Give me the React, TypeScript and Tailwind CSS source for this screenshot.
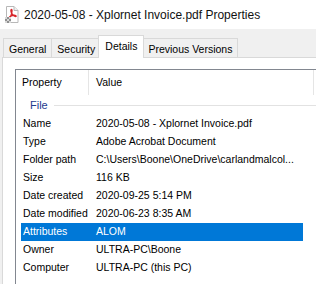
import React from "react";

const rows = [
  ["Name", "2020-05-08 - Xplornet Invoice.pdf"],
  ["Type", "Adobe Acrobat Document"],
  ["Folder path", "C:\\Users\\Boone\\OneDrive\\carlandmalcol..."],
  ["Size", "116 KB"],
  ["Date created", "2020-09-25 5:14 PM"],
  ["Date modified", "2020-06-23 8:35 AM"],
  ["Attributes", "ALOM"],
  ["Owner", "ULTRA-PC\\Boone"],
  ["Computer", "ULTRA-PC (this PC)"],
];

const tabs = ["General", "Security", "Details", "Previous Versions"];

const PdfIcon = () => (
  <svg width="14" height="17" viewBox="0 0 14 17">
    <path d="M1.5 0.5h7.5l4 4v12h-11.5z" fill="#fff" stroke="#b8b8b8" />
    <path d="M9 0.5v4h4" fill="#eee" stroke="#b8b8b8" />
    <path
      d="M6.5 3.5c-1 0-.7 2.4.4 4.2 1.1 1.8 2.9 3 4 2.7.9-.3-.4-1.5-2.9-1-2.4.5-4.3 1.9-3.9 2.6.4.6 1.8-1.6 2.4-4.1.5-2.2.9-4.4 0-4.4z"
      fill="none"
      stroke="#d6262b"
      strokeWidth="1.3"
    />
    <rect x="0" y="11" width="6" height="6" fill="#8f8f8f" />
    <path d="M0 11h2v2H0zM4 11h2v2H4zM2 13h2v2H2zM0 15h2v2H0zM4 15h2v2H4z" fill="#d8d8d8" />
  </svg>
);

export default function App() {
  return (
    <div className="w-[316px] h-[284px] overflow-hidden bg-[#f0f0f0] font-['Liberation_Sans',Arial,sans-serif] text-black flex flex-col">
      <div className="h-[29px] shrink-0 bg-white flex items-center pl-[5px]">
        <PdfIcon />
        <span className="ml-[5px] text-[12px] text-[#111]">
          2020-05-08 - Xplornet Invoice.pdf Properties
        </span>
      </div>

      <div className="h-[28px] shrink-0 flex items-end pl-[3px] relative z-10">
        {tabs.map((t) => {
          const active = t === "Details";
          return active ? (
            <div
              key={t}
              className="h-[23px] -mb-px -mx-[2px] px-[6px] pt-[3px] bg-white border border-b-0 border-[#d9d9d9] text-[10.5px] relative z-10"
            >
              {t}
            </div>
          ) : (
            <div
              key={t}
              className="h-[19px] px-[5px] pt-[3px] border border-b-0 border-r-0 last:border-r border-[#d9d9d9] text-[10.5px]"
            >
              {t}
            </div>
          );
        })}
      </div>

      <div className="flex-1 bg-white border-t border-l border-[#d9d9d9] ml-[2px] pl-[12px] pt-[11px]">
        <div className="h-full border-t border-l border-[#828790] text-[10.5px]">
          <div className="h-[25px] flex items-center">
            <div className="w-[73px] pl-[6px] h-full flex items-center border-r border-[#e5e5e5] my-[4px]">
              Property
            </div>
            <div className="flex-1 pl-[7px] h-full flex items-center border-r border-[#e5e5e5]">
              Value
            </div>
            <div className="w-[2px]" />
          </div>
          <div className="h-[20px] flex items-center pl-[14px]">
            <span className="text-[#1e3c8f] text-[11px]">File</span>
            <div className="flex-1 ml-[6px] h-px bg-[#e2e2e2]" />
          </div>
          {rows.map(([k, v]) => {
            const sel = k === "Attributes";
            return (
              <div
                key={k}
                className={`h-[18px] flex items-center ml-[5px] w-[282px] ${
                  sel ? "bg-[#0078d7] text-white" : ""
                }`}
              >
                <div className="w-[68px] pl-[2px] whitespace-nowrap">{k}</div>
                <div className="flex-1 pl-[7px] whitespace-nowrap">{v}</div>
              </div>
            );
          })}
        </div>
      </div>
    </div>
  );
}
